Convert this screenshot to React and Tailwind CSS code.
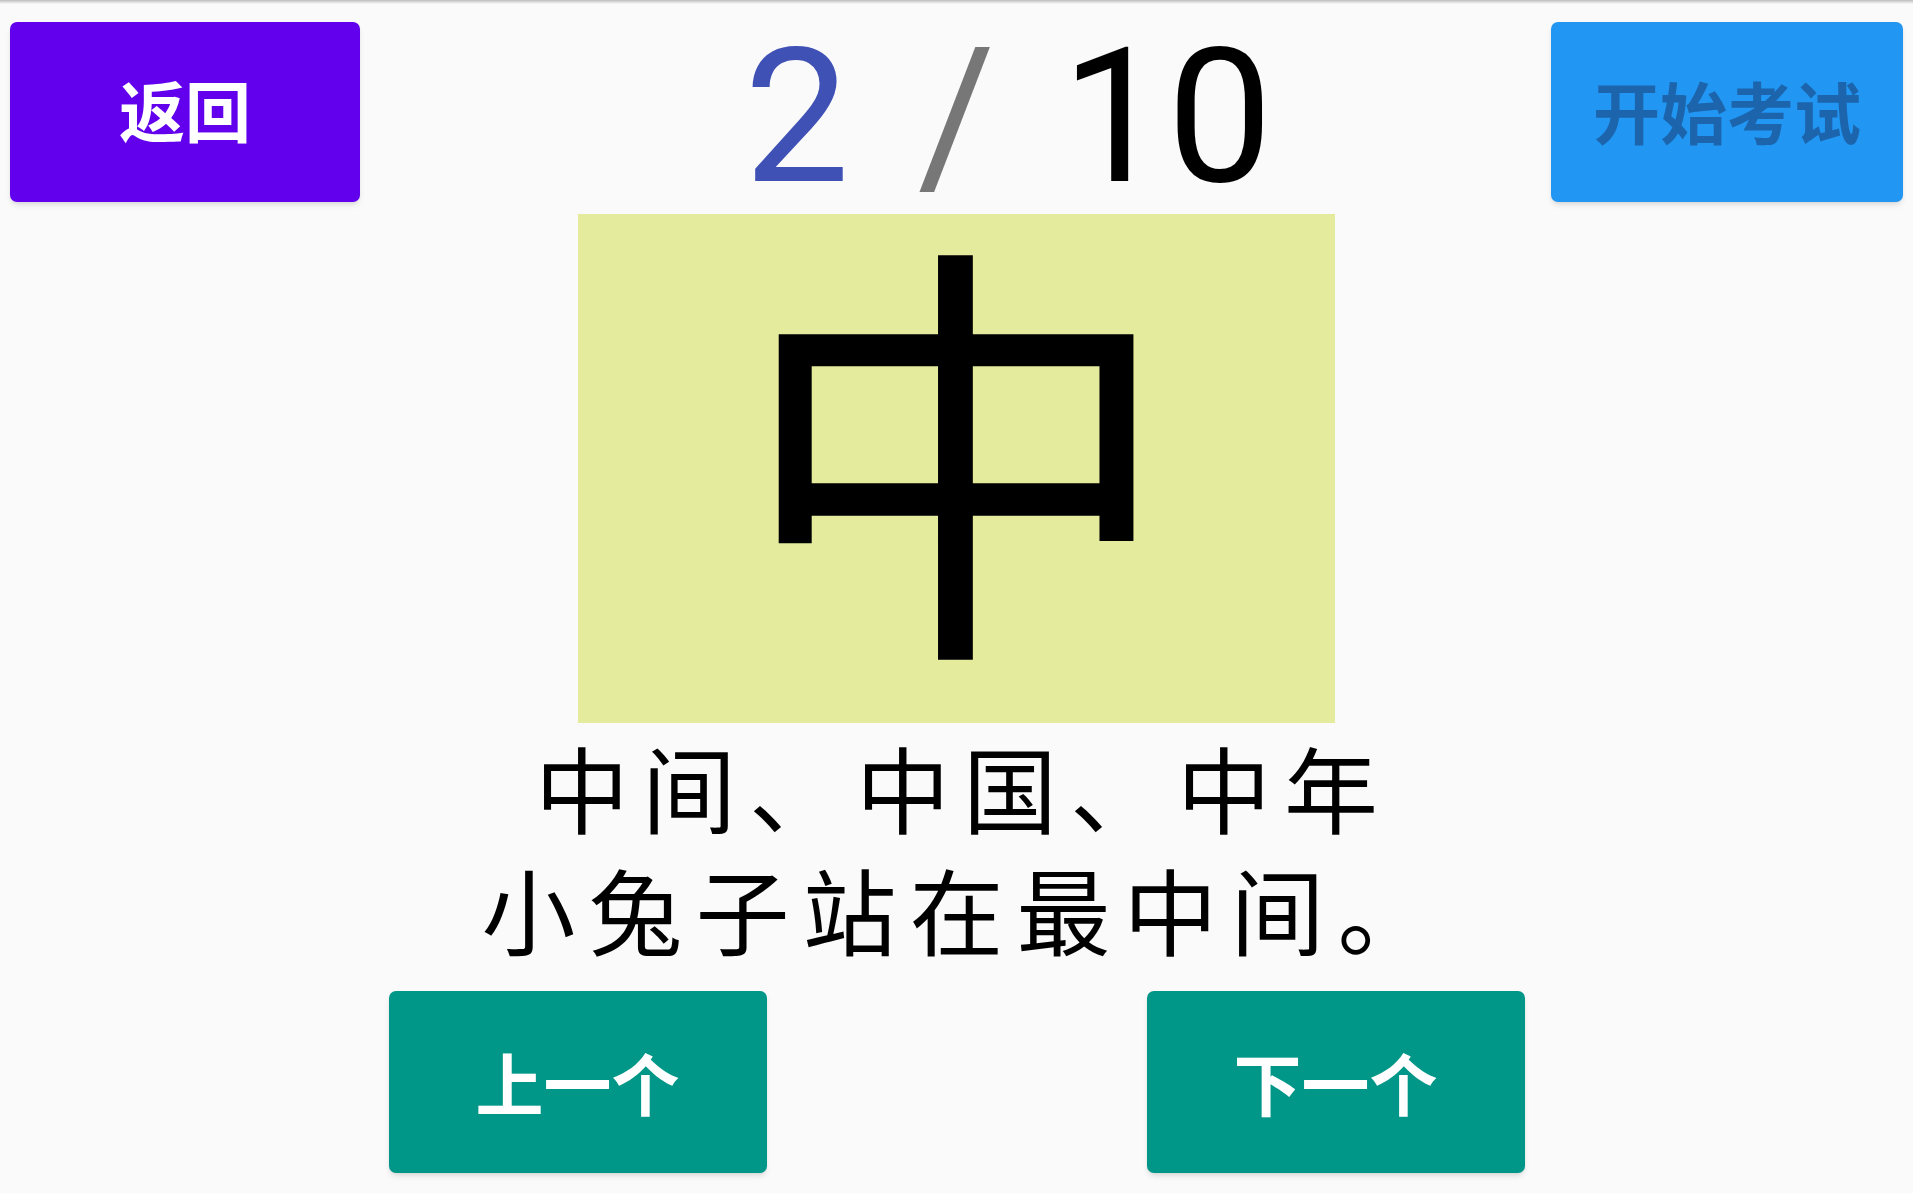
import React from 'react';

const cjk = "font-['Noto_Sans_CJK_SC',sans-serif]";

const App = () => {
    const examples = ['中间、中国、中年', '小兔子站在最中间。'];

    return (
        <div className="w-[1913px] h-[1193px] bg-[#fafafa] overflow-hidden">
            {/* top edge shadow */}
            <div className="h-[4px] bg-gradient-to-b from-[#bdbdbd] to-transparent" />

            {/* Header: back, counter, start */}
            <div className="grid grid-cols-[350px_1fr_352px] items-start h-[198px] px-[10px] pt-[18px]">
                <button className={`h-[180px] rounded-[7px] bg-[#6200ee] shadow-md text-white text-[66px] font-bold leading-none pb-[8px] ${cjk}`}>
                    返回
                </button>

                <div className="flex justify-center items-start h-[180px] mt-[10px] font-['Roboto',sans-serif] text-[188px] leading-[170px]">
                    <span className="flex-1 text-right pr-[68px] text-[#3f51b5]">2</span>
                    <span className="text-[#777777]">/</span>
                    <span className="flex-1 text-left pl-[66px] text-black">10</span>
                </div>

                <button className={`h-[180px] rounded-[7px] bg-[#2196f3] shadow-md text-[#1c65ad] text-[67px] font-bold leading-none pb-[6px] ${cjk}`}>
                    开始考试
                </button>
            </div>

            {/* Character card */}
            <div className="mx-auto mt-[12px] w-[757px] h-[509px] bg-[#e4eb9c] flex items-center justify-center">
                <span className={`text-[440px] leading-[380px] text-black -mt-[70px] ${cjk}`}>中</span>
            </div>

            {/* Example words and sentence */}
            <div className={`mt-[2px] flex flex-col items-center text-black text-[94px] leading-[122px] tracking-[13px] ${cjk}`}>
                {examples.map((line) => (
                    <div key={line} className="pl-[13px]">{line}</div>
                ))}
            </div>

            {/* Prev / next */}
            <div className="mt-[22px] flex justify-center gap-[380px]">
                <button className={`w-[378px] h-[182px] rounded-[7px] bg-[#009688] shadow-md text-white text-[68px] font-bold leading-none ${cjk}`}>
                    上一个
                </button>
                <button className={`w-[378px] h-[182px] rounded-[7px] bg-[#009688] shadow-md text-white text-[68px] font-bold leading-none ${cjk}`}>
                    下一个
                </button>
            </div>
        </div>
    );
};

export default App;
